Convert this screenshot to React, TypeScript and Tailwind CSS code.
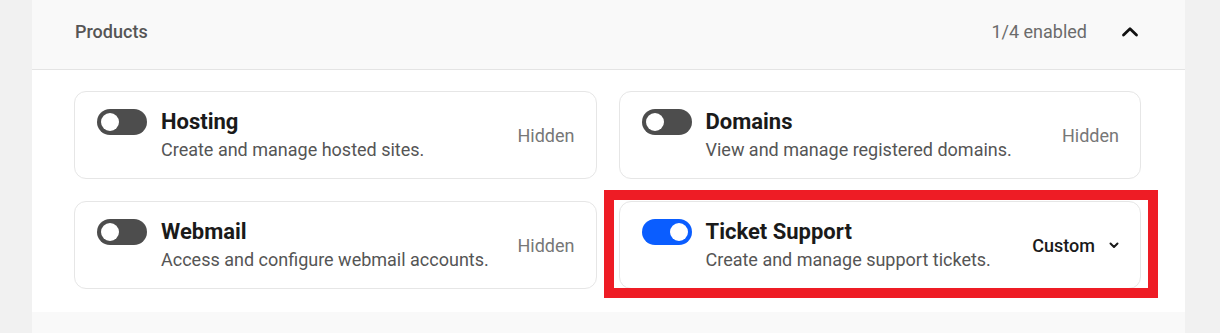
import { useState } from "react";

type Product = {
  name: string;
  description: string;
  enabled: boolean;
};

const PRODUCTS: Product[] = [
  { name: "Hosting", description: "Create and manage hosted sites.", enabled: false },
  { name: "Domains", description: "View and manage registered domains.", enabled: false },
  { name: "Webmail", description: "Access and configure webmail accounts.", enabled: false },
  { name: "Ticket Support", description: "Create and manage support tickets.", enabled: true },
];

function Toggle({ on, onClick }: { on: boolean; onClick: () => void }) {
  return (
    <button
      type="button"
      onClick={onClick}
      className={`flex h-[26px] w-[50px] shrink-0 items-center rounded-full px-[4px] ${
        on ? "justify-end bg-[#0a5dff]" : "justify-start bg-[#4d4d4d]"
      }`}
    >
      <span className="block h-[18px] w-[18px] rounded-full bg-white" />
    </button>
  );
}

function ProductCard({ product, onToggle }: { product: Product; onToggle: () => void }) {
  return (
    <div className="flex h-[88px] items-center justify-between rounded-[12px] border border-[#e6e6e6] bg-white px-[21px]">
      <div className="flex items-start gap-[14px] pl-[1px]">
        <Toggle on={product.enabled} onClick={onToggle} />
        <div className="-mt-[1px]">
          <div className="text-[22px] font-bold leading-[28px] text-[#1a1a1a]">{product.name}</div>
          <div className="mt-[2px] text-[18px] leading-[24px] text-[#555]">{product.description}</div>
        </div>
      </div>
      {product.enabled ? (
        <button type="button" className="flex items-center gap-[14px] text-[18px] font-medium text-[#1a1a1a]">
          Custom
          <svg width="10" height="7" viewBox="0 0 10 7" fill="none">
            <path d="M1.5 1.5 5 5l3.5-3.5" stroke="#1a1a1a" strokeWidth="2" strokeLinecap="round" strokeLinejoin="round" />
          </svg>
        </button>
      ) : (
        <span className="text-[18px] text-[#777]">Hidden</span>
      )}
    </div>
  );
}

export default function App() {
  const [products, setProducts] = useState(PRODUCTS);
  const enabledCount = products.filter((p) => p.enabled).length;

  function toggle(i: number) {
    setProducts((prev) => prev.map((p, j) => (j === i ? { ...p, enabled: !p.enabled } : p)));
  }

  return (
    <div className="relative h-[333px] w-[1220px] overflow-hidden bg-[#f1f1f1] font-['Roboto',sans-serif]">
      <div className="ml-[32px] w-[1153px]">
        <div className="flex h-[70px] items-center justify-between border-b border-[#e4e4e4] bg-[#f9f9f9] pb-[6px] pl-[43px] pr-[46px]">
          <span className="text-[18px] font-medium text-[#555]">Products</span>
          <div className="flex items-center gap-[34px]">
            <span className="text-[18px] text-[#6b6b6b]">
              {enabledCount}/{products.length} enabled
            </span>
            <svg width="18" height="12" viewBox="0 0 18 12" fill="none">
              <path d="M2.5 9 9 2.8 15.5 9" stroke="#111" strokeWidth="2.8" strokeLinecap="round" strokeLinejoin="round" />
            </svg>
          </div>
        </div>
        <div className="grid grid-cols-2 gap-[22px] bg-white pb-[23px] pl-[42px] pr-[44px] pt-[21px]">
          {products.map((p, i) => (
            <ProductCard key={p.name} product={p} onToggle={() => toggle(i)} />
          ))}
        </div>
        <div className="h-[30px] bg-[#f9f9f9]" />
      </div>
      {/* highlight annotation */}
      <div className="pointer-events-none absolute left-[604px] top-[190px] h-[108px] w-[554px] border-[10px] border-[#ee1c25]" />
    </div>
  );
}
